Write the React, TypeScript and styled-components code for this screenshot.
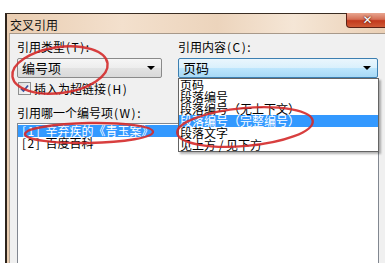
import React from 'react';
import styled, { createGlobalStyle } from 'styled-components';

const Global = createGlobalStyle`
  html, body { margin: 0; padding: 0; background: #ffffff; }
  body {
    font-family: "Noto Sans CJK SC", "Liberation Sans", sans-serif;
    font-size: 12px;
    color: #000;
    overflow: hidden;
  }
`;

const Page = styled.div`
  position: relative;
  width: 385px;
  height: 263px;
  overflow: hidden;
  box-sizing: border-box;
  padding: 13px 0 0 5px;
`;

const Window = styled.div`
  width: 384px;
  height: 260px;
  box-sizing: border-box;
  border-left: 2px solid #2e241c;
  border-top: 1px solid #3a2d22;
  background: linear-gradient(90deg, #e9cdb1 0%, #f3e0cd 30%, #ecd4bc 55%, #f5e6d6 75%, #eacfb4 100%);
  display: flex;
  flex-direction: column;
`;

const TitleBar = styled.div`
  height: 23px;
  display: flex;
  align-items: flex-start;
  justify-content: space-between;
`;

const Title = styled.div`
  font-size: 12px;
  line-height: 16px;
  padding: 3px 0 0 3px;
  color: #111;
`;

const CloseButton = styled.div`
  width: 43px;
  height: 15px;
  margin-top: -1px;
  box-sizing: border-box;
  border: 1px solid #5a2216;
  border-top: none;
  border-radius: 0 0 4px 4px;
  background: linear-gradient(180deg, #e8a690 0%, #d46f55 45%, #c2391c 55%, #cf5a36 100%);
  display: flex;
  align-items: center;
  justify-content: center;
  color: #fff;
  font-family: "DejaVu Sans", sans-serif;
  font-weight: bold;
  font-size: 12px;
  line-height: 12px;
  text-shadow: 0 0 2px #5a1a10, 0 0 1px #5a1a10;
`;

const Frame = styled.div`
  flex: 1;
  padding-left: 2px;
  display: flex;
`;

const Client = styled.div`
  flex: 1;
  border-left: 1px solid #b5a696;
  border-top: 1px solid #a8998a;
  background: #f0f0f0;
  box-sizing: border-box;
  padding: 6px 0 0 7px;
  display: flex;
  flex-direction: column;
`;

const TopRow = styled.div`
  display: flex;
  gap: 16px;
`;

const Column = styled.div<{ $w: number }>`
  position: relative;
  width: ${(p) => p.$w}px;
  display: flex;
  flex-direction: column;
`;

const Label = styled.div`
  height: 14px;
  line-height: 14px;
  font-size: 12px;
  white-space: nowrap;
  color: #000;
`;

const Latin = styled.span`
  letter-spacing: 1.5px;
  margin-left: 1px;
`;

const Combo = styled.div<{ $focus?: boolean }>`
  margin-top: 4px;
  height: 20px;
  box-sizing: border-box;
  border: 1px solid ${(p) => (p.$focus ? '#3c7fb1' : '#8a8a8a')};
  border-radius: 2px;
  background: ${(p) =>
    p.$focus
      ? 'linear-gradient(180deg, #eaf6fd 0%, #d9f0fc 50%, #bee6fd 50%, #a7d9f5 100%)'
      : 'linear-gradient(180deg, #f6f6f6 0%, #ededed 50%, #e3e3e3 50%, #d9d9d9 100%)'};
  display: flex;
  align-items: center;
  justify-content: space-between;
  padding: 0 6px 0 4px;
  font-size: 13px;
  line-height: 18px;
`;

const Arrow = styled.div`
  width: 0;
  height: 0;
  border-left: 4px solid transparent;
  border-right: 4px solid transparent;
  border-top: 4px solid #000;
`;

const Dropdown = styled.div`
  position: absolute;
  top: 38px;
  left: 0;
  width: 201px;
  box-sizing: border-box;
  border: 1px solid #646464;
  background: #fff;
  box-shadow: 2px 2px 2px rgba(0, 0, 0, 0.3);
  z-index: 2;
`;

const Item = styled.div<{ $sel?: boolean }>`
  height: 12px;
  line-height: 12px;
  font-size: 12px;
  padding-left: 1px;
  white-space: nowrap;
  background: ${(p) => (p.$sel ? '#3399ff' : 'transparent')};
  color: ${(p) => (p.$sel ? '#fff' : '#000')};
`;

const CheckRow = styled.div`
  margin-top: 4px;
  margin-left: 1px;
  height: 13px;
  display: flex;
  align-items: center;
  gap: 3px;
  line-height: 13px;
  white-space: nowrap;
`;

const CheckBox = styled.div`
  width: 13px;
  height: 13px;
  box-sizing: border-box;
  border: 1px solid #8e8f8f;
  background: linear-gradient(135deg, #dcdcdc 0%, #fbfbfb 100%);
  display: flex;
  align-items: center;
  justify-content: center;
`;

const ListLabel = styled(Label)`
  margin-top: 11px;
`;

const ListBox = styled.div`
  margin-top: 3px;
  width: 362px;
  height: 150px;
  box-sizing: border-box;
  border: 1px solid #828790;
  background: #fff;
  padding: 1px 0 0 0;
`;

const ListItem = styled(Item)`
  padding-left: 3px;
`;

const Marks = styled.svg`
  position: absolute;
  top: 0;
  left: 0;
  pointer-events: none;
  z-index: 5;
`;

export default function App() {
  return (
    <>
      <Global />
      <Page>
        <Window>
          <TitleBar>
            <Title>交叉引用</Title>
            <CloseButton>✕</CloseButton>
          </TitleBar>
          <Frame>
            <Client>
              <TopRow>
                <Column $w={145}>
                  <Label>
                    引用类型<Latin>(T):</Latin>
                  </Label>
                  <Combo>
                    <span>编号项</span>
                    <Arrow />
                  </Combo>
                </Column>
                <Column $w={200}>
                  <Label>
                    引用内容<Latin>(C):</Latin>
                  </Label>
                  <Combo $focus>
                    <span>页码</span>
                    <Arrow />
                  </Combo>
                  <Dropdown>
                    <Item>页码</Item>
                    <Item>段落编号</Item>
                    <Item>段落编号（无上下文）</Item>
                    <Item $sel>段落编号（完整编号）</Item>
                    <Item>段落文字</Item>
                    <Item>见上方 / 见下方</Item>
                  </Dropdown>
                </Column>
              </TopRow>
              <CheckRow>
                <CheckBox>
                  <svg width="9" height="9" viewBox="0 0 9 9">
                    <path d="M1 4.5 L3.5 7 L8 1.5" fill="none" stroke="#3b54a0" strokeWidth="1.8" />
                  </svg>
                </CheckBox>
                <span>
                  插入为超链接<Latin>(H)</Latin>
                </span>
              </CheckRow>
              <ListLabel>
                引用哪一个编号项<Latin>(W):</Latin>
              </ListLabel>
              <ListBox>
                <ListItem $sel>
                  <Latin>[1] </Latin>辛弃疾的《青玉案》
                </ListItem>
                <ListItem>
                  <Latin>[2] </Latin>百度百科
                </ListItem>
              </ListBox>
            </Client>
          </Frame>
        </Window>
        <Marks width="385" height="263" viewBox="0 0 385 263">
          <g fill="none" stroke="#d42a2a" strokeWidth="2.4" strokeOpacity="0.9">
            <ellipse cx="60" cy="70" rx="48" ry="23" transform="rotate(-8 60 70)" />
            <ellipse cx="89" cy="133" rx="64" ry="10" transform="rotate(-1 89 133)" />
            <ellipse cx="245" cy="127" rx="68" ry="19" transform="rotate(-5 245 127)" />
          </g>
        </Marks>
      </Page>
    </>
  );
}
